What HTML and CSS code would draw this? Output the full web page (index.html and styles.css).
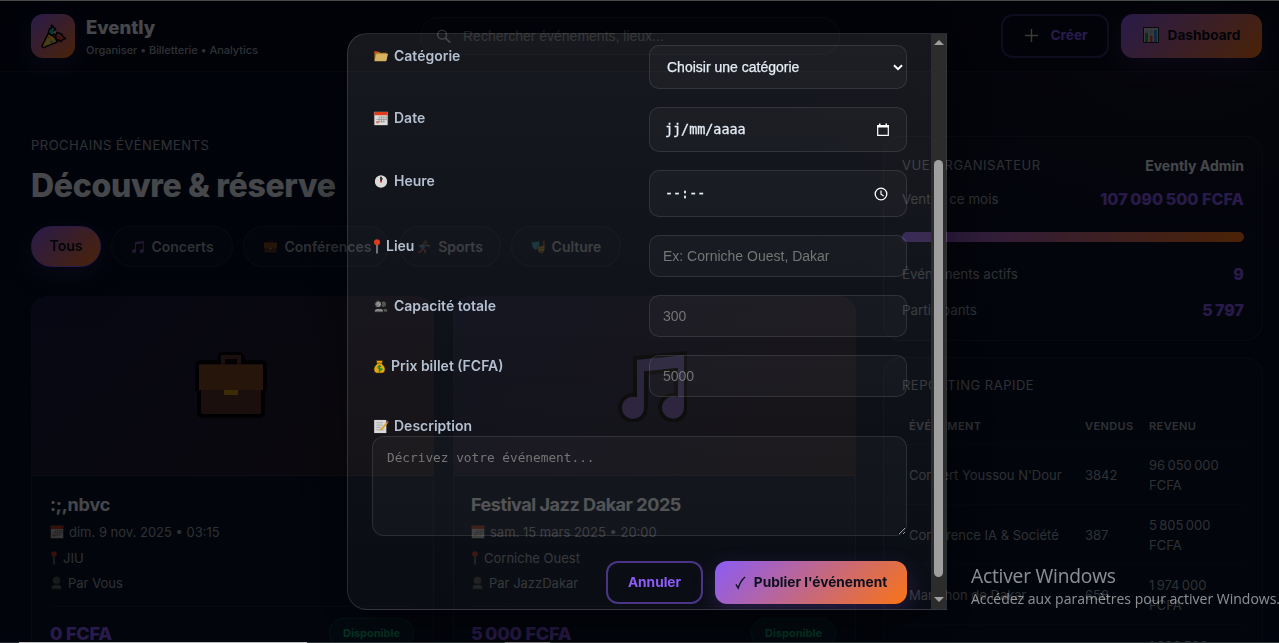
FILE: index.html
```html
<!DOCTYPE html>
<html lang="fr">
<head>
<meta charset="utf-8">
<title>Evently</title>
<link rel="stylesheet" href="styles.css">
</head>
<body>
<svg class="sprite" aria-hidden="true">
  <symbol id="i-party" viewBox="0 0 24 24"><g stroke="#000" stroke-width="1.4" stroke-linejoin="round"><path d="M7 9 1 21q0 2 2 1.500L16 17Q13 11 7 9z" fill="#ffc83d"/><path d="M8 5l2-1 0-3 2 2 2 2-2 2 1 3-3 1-3-3z" fill="#27b5c9"/><path d="M14 12l1-4 3 1 2 1 1 2 3 2-3 1-2 2-2-2-2 1z" fill="#d94a3d"/></g><circle cx="13" cy="8" r="1.300" fill="#ffc83d"/><circle cx="7" cy="13" r="1" fill="#f2503b"/><circle cx="10" cy="17" r="1.200" fill="#27b5c9"/></symbol>
  <symbol id="i-search" viewBox="0 0 16 16"><circle cx="6.500" cy="6" r="4.700" fill="none" stroke="currentColor" stroke-width="1.600"/><path d="M10 9.500l5 5" stroke="currentColor" stroke-width="2"/></symbol>
  <symbol id="i-plus" viewBox="0 0 16 16"><path d="M8 1v14M1 8h14" stroke="#000" stroke-width="3.400"/><path d="M8 1v14M1 8h14" stroke="#c9c9c9" stroke-width="1.500"/></symbol>
  <symbol id="i-chart" viewBox="0 0 16 16"><path d="M.5.5h15v15H.5z" fill="#c3c9d2" stroke="#222"/><path d="M4 2v12M8 2v12M12 2v12M2 5h12M2 9h12" stroke="#8b93a0" stroke-width=".6"/><path d="M2 6h3v9H2z" fill="#16a34a"/><path d="M7 9h2.500v6H7z" fill="#e0402b"/><path d="M11 3h3v12h-3z" fill="#2c8fe0"/></symbol>
  <symbol id="i-note" viewBox="0 0 72 72"><path d="M20 8 71 3V58A13 13 0 1 1 61 45V20L31 23V58A13 13 0 1 1 20 45z" fill="#8368c8" stroke="#000" stroke-width="4" stroke-linejoin="miter"/></symbol>
  <symbol id="i-case" viewBox="0 0 72 68"><path d="M24 10V6q0-4 4-4h16q4 0 4 4v4h18q4 0 4 4v21q0 3-2 4v21q0 4-4 4H8q-4 0-4-4V39q-2-1-2-4V14q0-4 4-4z" fill="#6b3b2c" stroke="#000" stroke-width="4"/><path d="M28 12V5h16v7" stroke="#6b3b2c" stroke-width="4" fill="#000"/><path d="M4 13h64v25H4z" fill="#945520"/><path d="M29 38h14v5H29z" fill="#efb400"/></symbol>
  <symbol id="i-run" viewBox="0 0 16 16"><circle cx="9" cy="2.500" r="2.200" fill="#7d4b2a"/><path d="M8 5 5 10" stroke="#2c8fe0" stroke-width="4"/><path d="M10 6l4 1M6 6 2 7" stroke="#e09a55" stroke-width="1.600"/><path d="M6 10l3 2-1 3M5 10l-1 3-3 1" fill="none" stroke="#d94a3d" stroke-width="1.800"/></symbol>
  <symbol id="i-masks" viewBox="0 0 16 16"><path d="M.5 2Q5 3 9 1v7q-2 4-5 3Q0 9 .5 2z" fill="#2bb7d8" stroke="#145"/><path d="M13 1h2v7h-2z" fill="#e0402b"/><path d="M7 7q4 1 8-1 1 7-3 9Q7 15 7 7z" fill="#f0b429" stroke="#543"/><path d="M9 10h1.500M12 9.500h1.500M10 13q1-1 2.500 0M3 5h1M6 4.500h1" stroke="#332" stroke-width=".9"/></symbol>
  <symbol id="i-cal" viewBox="0 0 16 16"><path d="M.5.5h15v15H.5z" fill="#ddd" stroke="#222" stroke-width=".8"/><path d="M1 1h14v3.500H1z" fill="#dd3b1c"/><path d="M6 6.500h8M3 9h11M3 11.500h9M6 6v6M8.500 6v6M11 6v6M13.500 6v4" stroke="#888" stroke-width=".7"/><path d="M3 11h2.500v2H3z" fill="#e8604a"/></symbol>
  <symbol id="i-pin" viewBox="0 0 8 16"><path d="M4 6v9.500" stroke="#a8a8a8" stroke-width="1.400"/><circle cx="4" cy="3.500" r="3.200" fill="#dd3b1c"/></symbol>
  <symbol id="i-user" viewBox="0 0 14 16"><circle cx="7" cy="5" r="4.500" fill="#777" stroke="#222"/><path d="M5 5q1-2 4-2M6 8q3-1 3-4" stroke="#333" fill="none" stroke-width=".8"/><path d="M1 15q0-5 4-5h4q4 0 4 5z" fill="#777" stroke="#222"/></symbol>
  <symbol id="i-users" viewBox="0 0 16 16"><circle cx="10.500" cy="5.500" r="3.500" fill="#555" stroke="#111"/><path d="M8 14q0-4 3-4h2q2.500 0 2.500 4z" fill="#555" stroke="#111"/><circle cx="5" cy="5.500" r="3.800" fill="#777" stroke="#111"/><path d="M4 6q0-2 2-2M5 8q2-1 2-3" stroke="#ccc" fill="none" stroke-width=".7"/><path d="M.5 14q0-4 3.500-4h4q3 0 3 4z" fill="#888" stroke="#111"/></symbol>
  <symbol id="i-folder" viewBox="0 0 16 16"><path d="M1 3h5l1 1h7v8H1z" fill="#a9781c"/><path d="M1 2.500h3v2H1z" fill="#dd3b1c"/><path d="M3 5h12.500L13.500 13H1z" fill="#d6b163"/></symbol>
  <symbol id="i-clock" viewBox="0 0 16 16"><circle cx="8" cy="8" r="7.200" fill="#dadada" stroke="#111" stroke-width="1.200"/><path d="M8 8V3" stroke="#222" stroke-width="1.800"/><path d="M8 8l1.500-3.500" stroke="#222"/><circle cx="8" cy="8" r="1.200" fill="#dd3b1c"/></symbol>
  <symbol id="i-money" viewBox="0 0 13 16"><path d="M3 1.500h7L9 5q3.500 3 3.500 6T10 15H3Q.5 14 .5 11T4 5z" fill="#e8a712" stroke="#3b2a00" stroke-width=".7"/><path d="M3.500 4.500h6" stroke="#8a5f00"/><path d="M8.500 8q-3-1.500-3.500.5t3 2-2.500 2.200M6.500 6.500v7.500" stroke="#1c8c32" stroke-width="1.200" fill="none"/></symbol>
  <symbol id="i-memo" viewBox="0 0 16 16"><path d="M.7 1h13v14H.7z" fill="#d8d8d8"/><path d="M3 4h7M3 6.500h7M3 9h5M3 11.500h8" stroke="#999" stroke-width=".8"/><path d="M14.500 4 7.500 12" stroke="#e0a31c" stroke-width="2"/><path d="M15.500 2.500l-1.500 2" stroke="#a55" stroke-width="2"/></symbol>
</svg>

<div class="page">
  <header class="topbar">
    <div class="brand">
      <div class="logo"><svg><use href="#i-party"/></svg></div>
      <div><div class="brand-name">Evently</div><div class="brand-sub">Organiser • Billetterie • Analytics</div></div>
    </div>
    <div class="search"><svg><use href="#i-search"/></svg><span>Rechercher événements, lieux...</span></div>
    <div class="actions">
      <button class="btn outline create"><svg><use href="#i-plus"/></svg>Créer</button>
      <button class="btn primary dash"><svg><use href="#i-chart"/></svg>Dashboard</button>
    </div>
  </header>
  <div class="layout">
    <main>
      <div class="kicker">PROCHAINS ÉVÉNEMENTS</div>
      <h1>Découvre &amp; réserve</h1>
      <div class="chips">
        <span class="chip active">Tous</span>
        <span class="chip c1"><svg><use href="#i-note"/></svg>Concerts</span>
        <span class="chip c2"><svg><use href="#i-case"/></svg>Conférences</span>
        <span class="chip c3"><svg><use href="#i-run"/></svg>Sports</span>
        <span class="chip c4"><svg><use href="#i-masks"/></svg>Culture</span>
      </div>
      <div class="cards">
        <article class="card">
          <div class="cover"><svg class="case"><use href="#i-case"/></svg></div>
          <div class="info">
            <h2>:;,nbvc</h2>
            <p><svg class="w15"><use href="#i-cal"/></svg>dim. 9 nov. 2025 • 03:15</p>
            <p><svg class="w9"><use href="#i-pin"/></svg>JIU</p>
            <p><svg class="w13"><use href="#i-user"/></svg>Par Vous</p>
            <div class="foot"><strong>0 FCFA</strong><span class="badge">Disponible</span></div>
          </div>
        </article>
        <article class="card">
          <div class="cover"><svg class="music"><use href="#i-note"/></svg></div>
          <div class="info">
            <h2>Festival Jazz Dakar 2025</h2>
            <p><svg class="w15"><use href="#i-cal"/></svg>sam. 15 mars 2025 • 20:00</p>
            <p><svg class="w9"><use href="#i-pin"/></svg>Corniche Ouest</p>
            <p><svg class="w13"><use href="#i-user"/></svg>Par JazzDakar</p>
            <div class="foot"><strong>5&#8239;000 FCFA</strong><span class="badge">Disponible</span></div>
          </div>
        </article>
      </div>
    </main>
    <aside>
      <section class="panel overview">
        <div class="row head"><span class="kicker">VUE ORGANISATEUR</span><b>Evently Admin</b></div>
        <div class="row"><span>Ventes ce mois</span><strong>107&#8239;090&#8239;500 FCFA</strong></div>
        <div class="bar"></div>
        <div class="row r3"><span>Événements actifs</span><strong>9</strong></div>
        <div class="row r4"><span>Participants</span><strong>5&#8239;797</strong></div>
      </section>
      <section class="panel report">
        <div class="kicker">REPORTING RAPIDE</div>
        <div class="tr th"><span>ÉVÉNEMENT</span><span>VENDUS</span><span>REVENU</span></div>
        <div class="tr"><span>Concert Youssou N'Dour</span><span>3842</span><span>96&#8239;050&#8239;000 FCFA</span></div>
        <div class="tr"><span>Conférence IA &amp; Société</span><span>387</span><span>5&#8239;805&#8239;000 FCFA</span></div>
        <div class="tr"><span>Marathon de Dakar</span><span>658</span><span>1&#8239;974&#8239;000 FCFA</span></div>
        <div class="tr last"><span>Match Amical: ASC Diaraf</span><span></span><span>1&#8239;000&#8239;500 FCFA</span></div>
      </section>
    </aside>
  </div>
</div>

<div class="overlay">
  <div class="modal">
    <form class="form">
      <div class="field"><label><svg class="w16"><use href="#i-folder"/></svg>Catégorie</label><div class="input select">Choisir une catégorie<svg viewBox="0 0 10 7"><path d="M1 1.200l4 4 4-4" fill="none" stroke="#fff" stroke-width="2"/></svg></div></div>
      <div class="field"><label><svg class="w16"><use href="#i-cal"/></svg>Date</label><div class="input date">jj/mm/aaaa<svg viewBox="0 0 14 14"><path d="M1.700 3h10.600v9.300H1.700z" fill="none" stroke="#fff" stroke-width="1.200"/><path d="M1 2h12v2.500H1zM3 .5h1.500v2H3zM9.500.5H11v2H9.500z" fill="#fff"/></svg></div></div>
      <div class="field"><label><svg class="w16"><use href="#i-clock"/></svg>Heure</label><div class="input time">--:--<svg viewBox="0 0 14 14"><circle cx="7" cy="7" r="5.800" fill="none" stroke="#fff" stroke-width="1.300"/><path d="M7 3.500V7.300l2.600 1.700" fill="none" stroke="#fff" stroke-width="1.200"/></svg></div></div>
      <div class="field"><label><svg class="w9"><use href="#i-pin"/></svg>Lieu</label><div class="input ph">Ex: Corniche Ouest, Dakar</div></div>
      <div class="field"><label><svg class="w16"><use href="#i-users"/></svg>Capacité totale</label><div class="input ph">300</div></div>
      <div class="field"><label><svg class="w13"><use href="#i-money"/></svg>Prix billet (FCFA)</label><div class="input ph">5000</div></div>
      <div class="desc"><label><svg class="w16"><use href="#i-memo"/></svg>Description</label><textarea placeholder="Décrivez votre événement..."></textarea></div>
      <div class="buttons"><button type="button" class="btn outline cancel">Annuler</button><button type="button" class="btn primary publish"><svg viewBox="0 0 12 14"><path d="M1 9l2.500 4Q6 5 11 1" fill="none" stroke="#0b1020" stroke-width="1.500"/></svg>Publier l'événement</button></div>
    </form>
    <div class="scroll"><i class="up"></i><i class="thumb"></i><i class="down"></i></div>
  </div>
</div>
<div class="watermark"><div>Activer Windows</div><p>Accédez aux paramètres pour activer Windows.</p></div>
<div class="edge-top"></div>
<div class="edge-bottom"></div>
</body>
</html>
```
FILE: styles.css
```css
* { box-sizing: border-box; }
html, body { margin: 0; width: 1279px; height: 643px; overflow: hidden; }
body { position: relative; background: #040a1d; color: #e6edf7; font-family: Inter, "Liberation Sans", sans-serif; font-size: 14px; }
svg { flex: none; overflow: visible; }
h1, h2, p { margin: 0; }
.sprite { position: absolute; width: 0; height: 0; }
.page { height: 643px; overflow: hidden; background: radial-gradient(700px 400px at 1180px 60px, rgba(249,115,22,.06), transparent 70%), linear-gradient(180deg, #040c24, #050f28); }

.topbar { height: 72px; padding: 1px 17px 0 31px; display: flex; align-items: center; border-bottom: 1px solid rgba(255,255,255,.07); background: rgba(1,6,22,.5); }
.brand { width: 389px; display: flex; gap: 11px; align-items: center; }
.logo { width: 44px; height: 44px; border-radius: 12px; background: linear-gradient(135deg, #8b5cf6, #f97316); display: grid; place-items: center; box-shadow: 0 8px 24px rgba(139,92,246,.2); }
.logo svg { width: 25px; height: 25px; }
.brand-name { font-weight: 800; font-size: 18.500px; line-height: 24px; }
.brand-sub { font-size: 11px; line-height: 16px; margin-top: 3px; color: #9ca3af; font-weight: 500; letter-spacing: -.03px; }
.search { width: 420px; height: 38px; border: 1px solid rgba(255,255,255,.08); border-radius: 19px; display: flex; align-items: center; padding-left: 15px; gap: 12px; color: #757575; font: 14px "Liberation Sans", sans-serif; background: rgba(255,255,255,.02); }
.search svg { width: 15px; height: 15px; color: #a0a8b5; }
.actions { margin-left: auto; display: flex; gap: 12px; }
.btn { display: flex; align-items: center; justify-content: center; height: 44px; padding: 0 0 2px; border-radius: 12px; font: 700 13.700px Inter, sans-serif; white-space: nowrap; }
.outline { border: 2px solid rgba(139,92,246,.5); background: transparent; color: #8b5cf6; }
.primary { border: 0; background: linear-gradient(135deg, #8b5cf6, #f97316); color: #0b1020; box-shadow: 0 8px 24px rgba(139,92,246,.22); }
.create { width: 108px; gap: 11px; padding-left: 2px; border-color: rgba(139,92,246,.36); }
.create svg { width: 15px; height: 15px; }
.dash { width: 141px; gap: 9px; }
.dash svg { width: 16px; height: 16px; }

.layout { display: grid; grid-template-columns: 825px 380px; column-gap: 27px; padding: 63px 0 0 31px; }
.kicker { font-size: 13px; line-height: 20px; letter-spacing: .5px; color: #9ca3af; }
h1 { font-size: 32px; font-weight: 800; line-height: 40px; margin-top: 11px; letter-spacing: -.32px; }
.chips { display: flex; gap: 10px; margin-top: 20px; }
.chip { height: 41px; border: 1px solid rgba(255,255,255,.08); border-radius: 21px; display: flex; align-items: center; justify-content: center; gap: 6px; font-weight: 600; font-size: 14px; color: #9ca3af; background: rgba(255,255,255,.02); }
.chip svg { width: 15px; height: 14px; opacity: .8; }
.active { width: 70px; padding-bottom: 2px; border-color: #8b5cf6; color: #0b1020; background: linear-gradient(135deg, #8b5cf6, #f97316); box-shadow: 0 8px 24px rgba(139,92,246,.18); }
.c1 { width: 122px; } .c2 { width: 146px; padding-left: 3px; } .c3 { width: 102px; } .c4 { width: 110px; }
.cards { display: grid; grid-template-columns: 403px 403px; gap: 19px; margin-top: 28px; }
.card { border: 1px solid rgba(255,255,255,.07); border-top-color: transparent; border-radius: 18px; overflow: hidden; background: rgba(255,255,255,.015); height: 400px; }
.cover { height: 180px; display: grid; place-items: center; background: linear-gradient(135deg, rgba(139,92,246,.13), rgba(249,115,22,.13)); border-bottom: 1px solid rgba(255,255,255,.07); }
.case { width: 72px; height: 68px; margin: 0 4px 0 0; opacity: .8; }
.music { width: 72px; height: 72px; margin-right: 7px; opacity: .8; }
.info { padding: 16px 18px; color: #9ca3af; }
.card + .card .info { padding-left: 17px; }
h2 { color: #e6edf7; font-size: 18px; font-weight: 700; line-height: 26px; margin-bottom: 3px; letter-spacing: -.45px; }
.card:first-child h2 { letter-spacing: -.2px; }
.info p { display: flex; align-items: center; height: 25.500px; gap: 5px; font-size: 13px; position: relative; top: -1.500px; }
.info p svg { height: 14px; opacity: .8; }
svg.w16 { width: 16px; } svg.w15 { width: 14px; } svg.w13 { width: 13px; } svg.w9 { width: 8px; }
.foot { margin-top: 8px; border-top: 1px solid rgba(255,255,255,.07); padding-top: 11px; display: flex; align-items: center; justify-content: space-between; height: 43px; }
.foot strong { color: #8b5cf6; font-size: 18px; font-weight: 800; letter-spacing: -.2px; }
.badge { width: 85px; height: 30px; border-radius: 15px; border: 1px solid rgba(16,185,129,.22); background: rgba(16,185,129,.09); color: #10b981; display: grid; place-items: center; font-size: 11px; font-weight: 700; margin-right: 1px; }

aside { display: flex; flex-direction: column; gap: 16px; padding-top: 1px; }
.panel { border: 1px solid rgba(255,255,255,.07); border-radius: 18px; padding: 17px 18px 18px; background: rgba(255,255,255,.015); color: #9ca3af; }
.overview { height: 205px; }
.row { display: flex; align-items: center; justify-content: space-between; height: 22px; font-size: 13.400px; }
.head b { color: #e6edf7; font-weight: 700; font-size: 14px; }
.row + .row { margin-top: 12px; }
.row strong { font-size: 16px; font-weight: 800; color: #8b5cf6; letter-spacing: .1px; }
.bar { margin: 22px 0 21px; height: 10px; border-radius: 5px; background: linear-gradient(90deg, #8b5cf6, #f97316); }
.row.r4 { margin-top: 14px; }
.report { height: 360px; }
.tr { display: grid; grid-template-columns: 176px 64px 86px; align-items: center; padding: 0 8px 0 7px; height: 60px; line-height: 20px; border-bottom: 1px solid rgba(255,255,255,.04); font-size: 13px; }
.tr span { white-space: nowrap; }
.tr span:last-child { white-space: normal; }
.tr.th { font-size: 11px; font-weight: 600; letter-spacing: .4px; height: 37px; margin-top: 13px; }
.tr.last { padding-top: 2px; }

.overlay { position: fixed; inset: 0; background: rgba(0,0,0,.7); padding: 33px 0 0 347px; }
.modal { width: 600px; height: 577px; display: flex; overflow: hidden; border: 1px solid rgba(255,255,255,.13); border-radius: 20px 0 0 20px; background: linear-gradient(180deg, rgba(255,255,255,.085), rgba(255,255,255,.03)); box-shadow: 0 20px 60px rgba(0,0,0,.5); }
.form { width: 583px; padding: 11px 24px 0; display: flex; flex-direction: column; gap: 18px; }
.field { display: grid; grid-template-columns: 259px 258px; column-gap: 18px; }
label { display: flex; align-items: center; gap: 5px; height: 21px; font-weight: 600; font-size: 14px; color: #b4bfcf; white-space: nowrap; }
label svg { height: 15px; margin-left: 1px; margin-top: 1px; }
.field label { margin-top: 0; }
.input { height: 42px; border: 1px solid rgba(255,255,255,.1); border-radius: 10px; background: rgba(255,255,255,.03); display: flex; align-items: center; justify-content: space-between; padding: 0 18px 0 13px; font: 14px "Liberation Sans", sans-serif; color: #e6edf7; }
.ph { color: #757575; }
.select { height: 44px; padding: 0 3px 0 17px; -webkit-text-stroke: .25px #e6edf7; }
.select svg { width: 10px; height: 7px; }
.date, .time { font: 500 13.400px "DejaVu Sans Mono", monospace; padding-left: 15px; -webkit-text-stroke: .3px #e6edf7; }
.date { height: 45px; padding-right: 16px; }
.time { height: 47px; }
.date svg, .time svg { width: 14px; height: 14px; }
textarea { display: block; width: 535px; height: 100px; padding: 13px 14px; border: 1px solid rgba(255,255,255,.1); border-radius: 12px; background: rgba(255,255,255,.03); font: 12.770px/15px "DejaVu Sans Mono", monospace; resize: vertical; outline: 0; }
textarea::placeholder { color: #757575; }
.buttons { display: flex; justify-content: flex-end; gap: 12px; margin-top: 7px; }
.buttons .btn { height: 43px; padding-bottom: 1px; }
.cancel { width: 97px; }
.publish { width: 192px; gap: 8px; }
.publish svg { width: 11px; height: 13px; }
.scroll { width: 15px; background: #2c2c2c; display: flex; flex-direction: column; align-items: center; padding: 6px 0; }
.up { border: 5px solid transparent; border-top: 0; border-bottom: 5px solid #9f9f9f; }
.thumb { width: 9px; height: 417px; margin-top: 115px; border-radius: 5px; background: #9f9f9f; }
.down { margin-top: 20px; border: 5px solid transparent; border-bottom: 0; border-top: 5px solid #9f9f9f; }

.watermark { position: fixed; left: 971px; top: 563px; width: 330px; color: rgba(255,255,255,.55); font-family: "Open Sans", sans-serif; font-weight: 400; white-space: nowrap; }
.watermark div { font-size: 19.200px; line-height: 26px; letter-spacing: -.2px; }
.watermark p { font-size: 14px; line-height: 20px; }
.edge-top { position: fixed; left: 0; top: 0; width: 1279px; height: 1px; background: #454b49; }
.edge-bottom { position: fixed; left: 0; top: 642px; width: 1279px; height: 1px; background: linear-gradient(90deg, #20272a 19px, #b9b9b9 19px 307px, #2c3937 307px 505px, #777 505px 550px, #2c3937 550px); }
```
